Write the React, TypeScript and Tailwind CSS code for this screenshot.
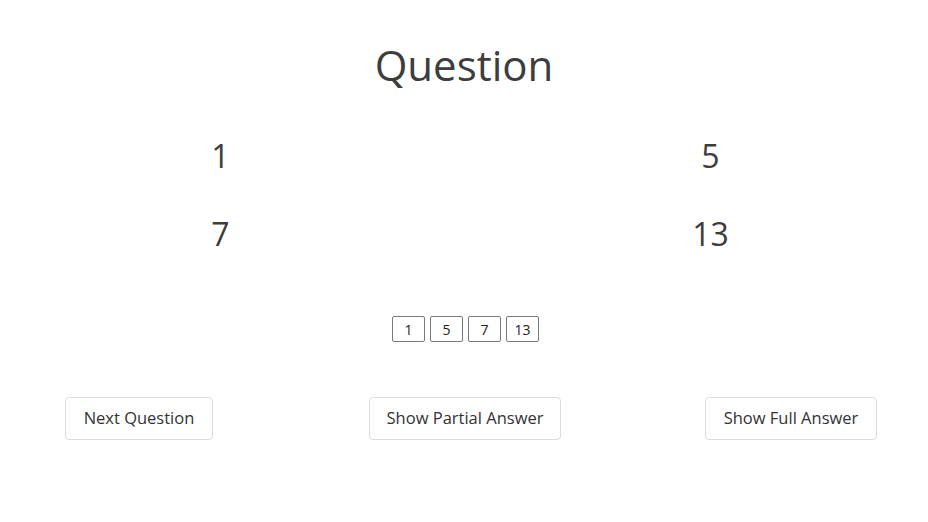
export default function App() {
  const numbers = [1, 5, 7, 13];

  return (
    <div className="min-h-screen bg-white text-[#3d3d3d] font-['Open_Sans',sans-serif]">
      {/* Title */}
      <h1 className="pt-[40px] text-center text-[42px] leading-[50px] font-normal">Question</h1>

      {/* Number grid */}
      <div className="mt-[46px] ml-[98px] grid w-[735px] grid-cols-[245px_245px_245px] gap-y-[38px] text-[32px] leading-[40px]">
        <div className="text-center">1</div>
        <div />
        <div className="text-center">5</div>
        <div className="text-center">7</div>
        <div />
        <div className="text-center">13</div>
      </div>

      {/* Small boxes */}
      <div className="mt-[62px] flex justify-center gap-[5px] pl-[3px]">
        {numbers.map((n) => (
          <div
            key={n}
            className="flex h-[26px] w-[33px] items-center justify-center rounded-[2px] border border-[#7a7a7a] text-[14px] text-[#222]"
          >
            {n}
          </div>
        ))}
      </div>

      {/* Buttons */}
      <div className="mt-[55px] flex pl-[65px]">
        <button className="h-[43px] w-[148px] rounded-[4px] border border-[#dcdcdc] text-[16.5px] text-[#333]">
          Next Question
        </button>
        <button className="ml-[156px] h-[43px] w-[192px] rounded-[4px] border border-[#dcdcdc] text-[16.5px] text-[#333]">
          Show Partial Answer
        </button>
        <button className="ml-[144px] h-[43px] w-[172px] rounded-[4px] border border-[#dcdcdc] text-[16.5px] text-[#333]">
          Show Full Answer
        </button>
      </div>
    </div>
  );
}
